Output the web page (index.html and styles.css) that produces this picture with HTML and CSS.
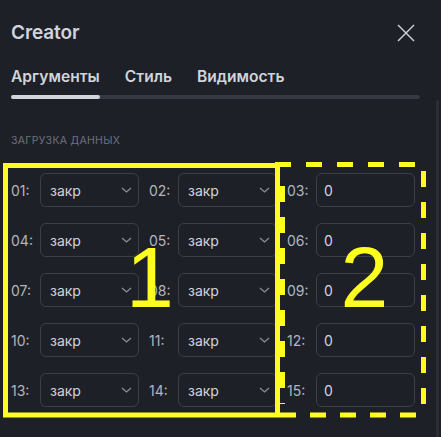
FILE: index.html
```html
<!DOCTYPE html>
<html lang="ru">
<head>
<meta charset="utf-8">
<title>Creator</title>
<link rel="stylesheet" href="styles.css">
</head>
<body>
<div class="dialog">
  <header class="head">
    <h1 class="title">Creator</h1>
    <button class="close" aria-label="Закрыть">
      <svg width="18" height="18" viewBox="0 0 18 18"><path d="M1 1L17 17M17 1L1 17" stroke="#d1d4dc" stroke-width="1.4" fill="none"/></svg>
    </button>
  </header>
  <nav class="tabs">
    <span class="tab active">Аргументы</span>
    <span class="tab">Стиль</span>
    <span class="tab">Видимость</span>
  </nav>
  <div class="section">Загрузка данных</div>
  <div class="grid">
    <div class="cell"><span class="lbl">01:</span><div class="field select">закр<svg class="chev" width="11" height="6" viewBox="0 0 11 6"><path d="M1 1l4.5 4 4.5-4" stroke="#8a8d97" stroke-width="1.3" fill="none"/></svg></div></div>
    <div class="cell"><span class="lbl">02:</span><div class="field select">закр<svg class="chev" width="11" height="6" viewBox="0 0 11 6"><path d="M1 1l4.5 4 4.5-4" stroke="#8a8d97" stroke-width="1.3" fill="none"/></svg></div></div>
    <div class="cell"><span class="lbl">03:</span><div class="field input">0</div></div>
    <div class="cell"><span class="lbl">04:</span><div class="field select">закр<svg class="chev" width="11" height="6" viewBox="0 0 11 6"><path d="M1 1l4.5 4 4.5-4" stroke="#8a8d97" stroke-width="1.3" fill="none"/></svg></div></div>
    <div class="cell"><span class="lbl">05:</span><div class="field select">закр<svg class="chev" width="11" height="6" viewBox="0 0 11 6"><path d="M1 1l4.5 4 4.5-4" stroke="#8a8d97" stroke-width="1.3" fill="none"/></svg></div></div>
    <div class="cell"><span class="lbl">06:</span><div class="field input">0</div></div>
    <div class="cell"><span class="lbl">07:</span><div class="field select">закр<svg class="chev" width="11" height="6" viewBox="0 0 11 6"><path d="M1 1l4.5 4 4.5-4" stroke="#8a8d97" stroke-width="1.3" fill="none"/></svg></div></div>
    <div class="cell"><span class="lbl">08:</span><div class="field select">закр<svg class="chev" width="11" height="6" viewBox="0 0 11 6"><path d="M1 1l4.5 4 4.5-4" stroke="#8a8d97" stroke-width="1.3" fill="none"/></svg></div></div>
    <div class="cell"><span class="lbl">09:</span><div class="field input">0</div></div>
    <div class="cell"><span class="lbl">10:</span><div class="field select">закр<svg class="chev" width="11" height="6" viewBox="0 0 11 6"><path d="M1 1l4.5 4 4.5-4" stroke="#8a8d97" stroke-width="1.3" fill="none"/></svg></div></div>
    <div class="cell"><span class="lbl">11:</span><div class="field select">закр<svg class="chev" width="11" height="6" viewBox="0 0 11 6"><path d="M1 1l4.5 4 4.5-4" stroke="#8a8d97" stroke-width="1.3" fill="none"/></svg></div></div>
    <div class="cell"><span class="lbl">12:</span><div class="field input">0</div></div>
    <div class="cell"><span class="lbl">13:</span><div class="field select">закр<svg class="chev" width="11" height="6" viewBox="0 0 11 6"><path d="M1 1l4.5 4 4.5-4" stroke="#8a8d97" stroke-width="1.3" fill="none"/></svg></div></div>
    <div class="cell"><span class="lbl">14:</span><div class="field select">закр<svg class="chev" width="11" height="6" viewBox="0 0 11 6"><path d="M1 1l4.5 4 4.5-4" stroke="#8a8d97" stroke-width="1.3" fill="none"/></svg></div></div>
    <div class="cell"><span class="lbl">15:</span><div class="field input">0</div></div>
  </div>
  <div class="scrollthumb"></div>
  <svg class="annot" width="441" height="437" viewBox="0 0 441 437">
    <rect x="5.5" y="165.5" width="272" height="249.5" fill="none" stroke="#fdfd20" stroke-width="5"/>
    <line x1="275" y1="164.5" x2="426" y2="164.5" stroke="#fdfd20" stroke-width="5" stroke-dasharray="16 15"/>
    <line x1="280" y1="415" x2="420" y2="415" stroke="#fdfd20" stroke-width="5" stroke-dasharray="16 14"/>
    <line x1="423.5" y1="171" x2="423.5" y2="404" stroke="#fdfd20" stroke-width="5" stroke-dasharray="16 15"/>
    <line x1="282.5" y1="186" x2="282.5" y2="404" stroke="#fdfd20" stroke-width="5" stroke-dasharray="16 15"/>
    <text x="126" y="307" class="num">1</text>
    <text x="340.4" y="307" class="num">2</text>
  </svg>
</div>
</body>
</html>
```

FILE: styles.css
```css
html, body {
  margin: 0;
  padding: 0;
}
body {
  background: #1e2028;
  width: 441px;
  height: 437px;
  overflow: hidden;
  font-family: Inter, "Noto Sans", sans-serif;
  color: #d1d4dc;
}
.dialog {
  position: relative;
  width: 441px;
  height: 437px;
  box-sizing: border-box;
  padding: 21px 0 0 11px;
}
.head {
  display: flex;
  align-items: center;
  justify-content: space-between;
  padding-right: 26px;
}
.title {
  margin: 0;
  font-size: 19px;
  line-height: 24px;
  font-weight: 600;
  color: #d1d4dc;
  letter-spacing: -0.1px;
}
.close {
  background: none;
  border: 0;
  padding: 0;
  width: 18px;
  height: 18px;
  display: flex;
  cursor: pointer;
}
.tabs {
  position: relative;
  display: flex;
  gap: 25px;
  margin: 22px 21px 0 0;
}
.tabs::before {
  content: "";
  position: absolute;
  left: 0;
  right: 0;
  bottom: 0;
  height: 4px;
  border-radius: 2px;
  background: #363943;
}
.tab {
  position: relative;
  font-size: 15.6px;
  line-height: 20px;
  font-weight: 600;
  padding-bottom: 12px;
  color: #d1d4dc;
}
.tab.active::after {
  content: "";
  position: absolute;
  left: 0;
  right: 0;
  bottom: 0;
  height: 4px;
  border-radius: 2px;
  background: #d1d4dc;
}
.section {
  margin-top: 35px;
  font-size: 10.5px;
  line-height: 14px;
  text-transform: uppercase;
  letter-spacing: 0.3px;
  color: #6e717c;
}
.grid {
  margin-top: 25px;
  display: grid;
  grid-template-columns: repeat(3, 128px);
  column-gap: 10px;
  row-gap: 16px;
}
.cell {
  display: flex;
  align-items: center;
}
.lbl {
  width: 29px;
  flex: none;
  font-size: 14px;
  color: #b2b5be;
}
.field {
  box-sizing: border-box;
  width: 99px;
  height: 34px;
  border: 1px solid #3c3f49;
  border-radius: 6px;
  display: flex;
  align-items: center;
  font-size: 14px;
  color: #d1d4dc;
}
.select {
  padding: 0 6px 0 9px;
  justify-content: space-between;
}
.input {
  padding-left: 7px;
}
.chev {
  display: block;
}
.scrollthumb {
  position: absolute;
  right: 2px;
  top: 100px;
  bottom: 0;
  width: 3px;
  background: #2b2e37;
  border-radius: 2px;
}
.annot {
  position: absolute;
  left: 0;
  top: 0;
  pointer-events: none;
}
.num {
  font-family: "Liberation Sans", Arial, sans-serif;
  font-size: 86px;
  fill: #fdfd20;
}
```
